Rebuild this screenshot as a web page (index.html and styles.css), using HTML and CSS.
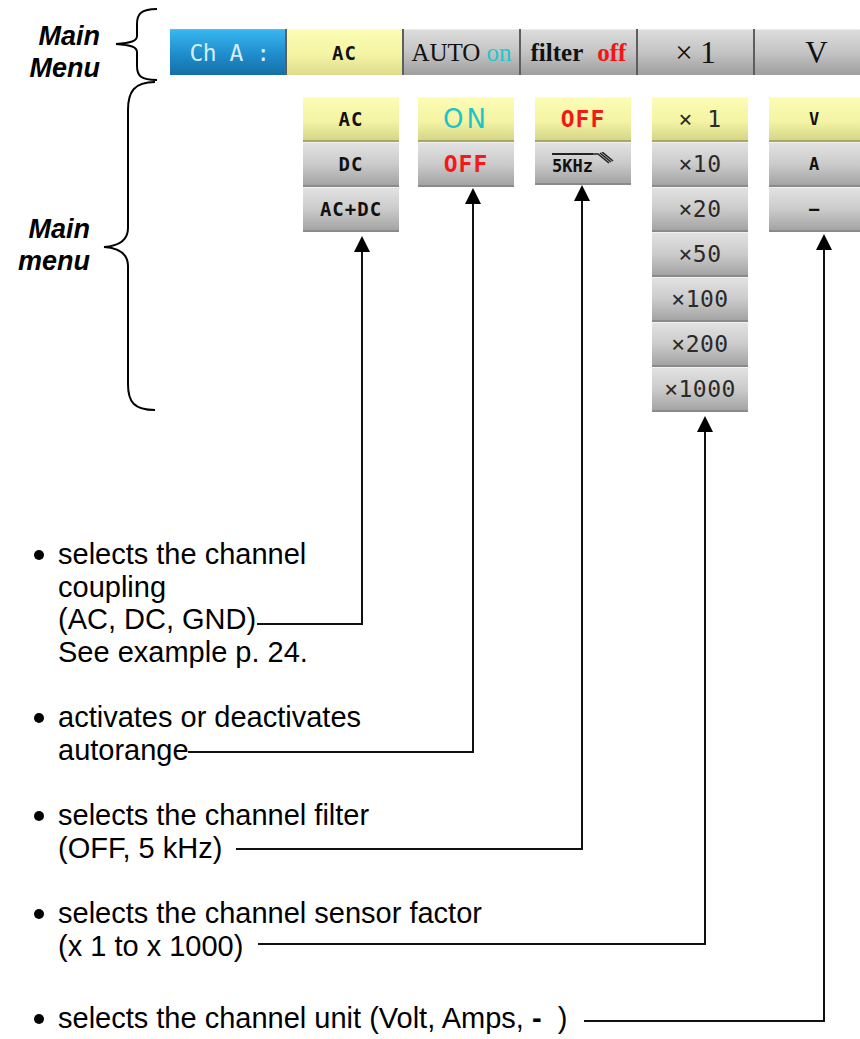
FILE: index.html
```html
<!DOCTYPE html>
<html lang="en">
<head>
    <meta charset="utf-8">
    <title>Channel menu</title>
    <link rel="stylesheet" href="styles.css">
</head>
<body>
<div id="page">
    <div id="head">
        <div class="tag tagtop">Main<br>Menu</div>
        <div id="menubar">
            <div class="seg chan">Ch A :</div>
            <div class="seg sel pix">AC</div>
            <div class="seg serif">AUTO&nbsp;<span class="cyan">on</span></div>
            <div class="seg serif heavy">filter<span class="red gap">off</span></div>
            <div class="seg serif big">×&nbsp;1</div>
            <div class="seg serif big last">V</div>
        </div>
    </div>

    <div id="sub">
        <div class="tag tagsub">Main<br>menu</div>
        <div id="drops">
            <div class="col">
                <div class="cell sel pix">AC</div>
                <div class="cell pix">DC</div>
                <div class="cell pix">AC+DC</div>
            </div>
            <div class="col">
                <div class="cell sel on">ON</div>
                <div class="cell off">OFF</div>
            </div>
            <div class="col">
                <div class="cell sel off">OFF</div>
                <div class="cell short pix">
                    <span class="khz">5KHz</span>
                    <svg class="hatch" width="22" height="18" viewBox="0 0 22 18">
                        <path d="M0 2 H6 L17 11 M8 1 L19 10 M10 0 L21 9" stroke="#222" stroke-width="1.6" fill="none"/>
                    </svg>
                </div>
            </div>
            <div class="col">
                <div class="cell sel mult">× 1</div>
                <div class="cell mult">×10</div>
                <div class="cell mult">×20</div>
                <div class="cell mult">×50</div>
                <div class="cell mult">×100</div>
                <div class="cell mult">×200</div>
                <div class="cell mult">×1000</div>
            </div>
            <div class="col lastcol">
                <div class="cell sel pix small">V</div>
                <div class="cell pix small">A</div>
                <div class="cell pix small">—</div>
            </div>
        </div>
    </div>

    <ul id="notes">
        <li>selects the channel<br>coupling<br>(AC, DC, GND)<br>See example p. 24.</li>
        <li>activates or deactivates<br>autorange</li>
        <li>selects the channel filter<br>(OFF, 5 kHz)</li>
        <li>selects the channel sensor factor<br>(x 1 to x 1000)</li>
        <li class="far">selects the channel unit (Volt, Amps, <b class="dash">-</b>&nbsp; )</li>
    </ul>

    <!-- braces and leader lines of the diagram -->
    <svg id="wires" width="860" height="1039" viewBox="0 0 860 1039">
        <g fill="none" stroke="#000" stroke-width="2">
            <path d="M157 9 C141 9 137 14 137 24 L137 36 C137 41 131 43 116 44 C131 45 137 47 137 52 L137 66 C137 76 141 80 157 80"/>
            <path d="M155 82 C134 82 128 92 128 110 L128 228 C128 240 119 246 104 247 C119 248 128 254 128 266 L128 384 C128 402 134 410 155 410"/>
        </g>
        <g fill="none" stroke="#111" stroke-width="2">
            <polyline points="362,250 362,624 257,624"/>
            <polyline points="473,202 473,752 188,752"/>
            <polyline points="582,199 582,849 236,849"/>
            <polyline points="705,430 705,944 258,944"/>
            <polyline points="824,248 824,1021 584,1021"/>
        </g>
        <g fill="#000">
            <polygon points="362,236 354,252 370,252"/>
            <polygon points="473,188 465,204 481,204"/>
            <polygon points="582,185 574,201 590,201"/>
            <polygon points="705,416 697,432 713,432"/>
            <polygon points="824,234 816,250 832,250"/>
        </g>
    </svg>
</div>
</body>
</html>
```

FILE: styles.css
```css
body {
    margin:0;
    background:#fff;
}
#page {
    position:relative;
    width:860px;
    height:1039px;
    overflow:hidden;
    font-family:"Liberation Sans", Arial, sans-serif;
    color:#000;
}
.tag {
    font-weight:bold;
    font-style:italic;
    font-size:27px;
    line-height:32px;
    text-align:right;
    flex:0 0 auto;
}
#head {
    display:flex;
    align-items:flex-start;
    padding-top:20px;
    height:55px;
}
.tagtop {
    width:100px;
}
#menubar {
    display:flex;
    gap:2px;
    flex:1;
    height:46px;
    margin:9px 0 0 70px;
    background:#5e5e5e;
}
.seg {
    flex:0 0 115px;
    display:flex;
    align-items:center;
    justify-content:center;
    background:linear-gradient(#dcdcdc, #c4c4c4 50%, #9e9e9e);
    border-top:1px solid #ececec;
    box-sizing:border-box;
    white-space:nowrap;
}
.seg.last {
    flex:1;
    padding-left:18px;
}
.seg.chan {
    background:linear-gradient(#38b6f0, #1f8ccb 55%, #166fa6);
    border-top-color:#4cc2f6;
    color:#d6eefa;
    font-family:"DejaVu Sans Mono", monospace;
    font-size:23px;
    letter-spacing:-0.5px;
    padding-left:4px;
}
.sel {
    background:linear-gradient(#fcfcb4, #f4f4a4 55%, #dcdc8c);
}
.seg.sel {
    border-top-color:#fdfdc8;
}
.pix {
    font-family:"DejaVu Sans Mono", monospace;
    font-weight:bold;
    font-size:19px;
    letter-spacing:1px;
    color:#111;
}
.serif {
    font-family:"Liberation Serif", "Times New Roman", serif;
    font-size:25px;
    color:#111;
}
.serif.heavy {
    font-weight:bold;
}
.serif.big {
    font-size:31px;
}
.cyan {
    color:#1ec8cc;
}
.red {
    color:#f41414;
}
.gap {
    margin-left:14px;
}

#sub {
    display:flex;
    align-items:flex-start;
    margin-top:22px;
}
.tagsub {
    width:90px;
    margin-top:116px;
}
#drops {
    display:flex;
    align-items:flex-start;
    gap:21px;
    margin-left:213px;
}
.col {
    display:flex;
    flex-direction:column;
    width:96px;
}
.col:first-child {
    margin-right:-2px;
}
.lastcol {
    width:91px;
}
.cell {
    height:45px;
    box-sizing:border-box;
    display:flex;
    align-items:center;
    justify-content:center;
    background:linear-gradient(#e2e2e2, #cbcbcb 50%, #a4a4a4);
    border-top:1px solid #f2f2f2;
    border-bottom:2px solid #8a8a8a;
}
.cell.sel {
    background:linear-gradient(#fcfcb4, #f4f4a4 55%, #d6d688);
    border-top-color:#fdfdc8;
    border-bottom-color:#a8a864;
}
.cell.short {
    height:43px;
}
.cell.small {
    font-size:17px;
}
.on {
    font-family:"DejaVu Sans", sans-serif;
    font-size:26px;
    letter-spacing:3px;
    color:#1cc4c8;
}
.off {
    font-family:"DejaVu Sans Mono", monospace;
    font-weight:bold;
    font-size:23px;
    letter-spacing:1px;
    color:#f41818;
}
.mult {
    font-family:"DejaVu Sans Mono", monospace;
    font-size:23px;
    letter-spacing:0.5px;
    color:#2a2a2a;
}
.khz {
    border-top:2px solid #222;
    padding-top:1px;
    font-size:17px;
    letter-spacing:0;
    margin-top:2px;
}
.hatch {
    margin:-4px 0 0 -1px;
}

#notes {
    list-style:none;
    margin:126px 0 0;
    padding:0 0 0 58px;
    font-size:29px;
    line-height:32.5px;
    white-space:nowrap;
}
#notes li {
    position:relative;
}
#notes li + li {
    margin-top:33px;
}
#notes li.far {
    margin-top:40px;
}
#notes li::before {
    content:'';
    position:absolute;
    left:-24px;
    top:12px;
    width:10px;
    height:10px;
    border-radius:50%;
    background:#000;
}
.dash {
    font-weight:bold;
}
#wires {
    position:absolute;
    left:0;
    top:0;
    pointer-events:none;
}
```
